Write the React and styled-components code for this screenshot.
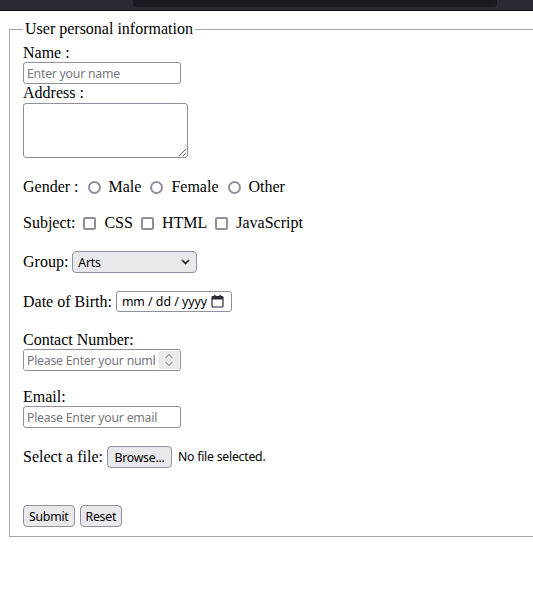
import React from "react";
import styled, { createGlobalStyle } from "styled-components";

const GlobalStyle = createGlobalStyle`
  html, body {
    margin: 0;
    padding: 0;
    overflow: hidden;
    background: #fff;
  }
  body {
    font-family: "Liberation Serif", "Times New Roman", serif;
    font-size: 16px;
    color: #000;
  }
`;

const controlFont = `
  font-family: "Noto Sans", "Open Sans", sans-serif;
  font-size: 12.3px;
  letter-spacing: -0.25px;
`;

const App = () => {
  return (
    <>
      <GlobalStyle />
      <TopBar>
        <TabStrip />
      </TopBar>
      <Page>
        <Fieldset>
          <Legend>User personal information</Legend>

          <FieldLabel htmlFor="name">Name :</FieldLabel>
          <TextInput id="name" type="text" placeholder="Enter your name" />

          <FieldLabel htmlFor="address">Address :</FieldLabel>
          <AddressBox id="address" />

          <Row $top={20}>
            <span>Gender :</span>
            <Radio type="radio" name="gender" />
            <span>Male</span>
            <Radio type="radio" name="gender" />
            <span>Female</span>
            <Radio type="radio" name="gender" />
            <span>Other</span>
          </Row>

          <Row $top={18}>
            <span>Subject:</span>
            <Checkbox type="checkbox" />
            <span>CSS</span>
            <Checkbox type="checkbox" />
            <span>HTML</span>
            <Checkbox type="checkbox" />
            <span>JavaScript</span>
          </Row>

          <Row $top={19} $height={22}>
            <span>Group:</span>
            <SelectBox defaultValue="arts">
              <option value="arts">Arts</option>
              <option value="science">Science</option>
              <option value="commerce">Commerce</option>
            </SelectBox>
          </Row>

          <Row $top={18} $height={21}>
            <span>Date of Birth:</span>
            <DateBox>
              <DateText>mm / dd / yyyy</DateText>
              <svg width="13" height="13" viewBox="0 0 13 13">
                <rect x="1" y="1.5" width="11" height="10.5" rx="1" fill="none" stroke="#2b2a33" strokeWidth="1.2" />
                <rect x="1" y="1.5" width="11" height="3" fill="#2b2a33" />
                <rect x="3" y="0" width="1.5" height="2.5" fill="#2b2a33" />
                <rect x="8.5" y="0" width="1.5" height="2.5" fill="#2b2a33" />
              </svg>
            </DateBox>
          </Row>

          <FieldLabel $top={19} htmlFor="contact">Contact Number:</FieldLabel>
          <NumberBox>
            <BareInput id="contact" type="text" placeholder="Please Enter your number" />
            <Spinner>
              <svg width="10" height="16" viewBox="0 0 10 16">
                <path d="M1.5 6 L5 2.5 L8.5 6" fill="none" stroke="#a3a3ab" strokeWidth="1.3" />
                <path d="M1.5 10 L5 13.5 L8.5 10" fill="none" stroke="#a3a3ab" strokeWidth="1.3" />
              </svg>
            </Spinner>
          </NumberBox>

          <FieldLabel $top={17} htmlFor="email">Email:</FieldLabel>
          <TextInput id="email" type="email" placeholder="Please Enter your email" />

          <Row $top={18} $height={22}>
            <span>Select a file:</span>
            <FileButton type="button">Browse...</FileButton>
            <FileStatus>No file selected.</FileStatus>
          </Row>

          <ButtonRow>
            <PushButton type="submit">Submit</PushButton>
            <PushButton type="reset">Reset</PushButton>
          </ButtonRow>
        </Fieldset>
      </Page>
    </>
  );
};

export default App;

// Styled Components
const TopBar = styled.div`
  height: 10px;
  background: #2b2a33;
  border-bottom: 1px solid #0c0c0d;
  padding-left: 133px;
`;

const TabStrip = styled.div`
  width: 364px;
  height: 7px;
  background: #1c1b22;
  border-radius: 0 0 4px 4px;
`;

const Page = styled.div`
  padding: 9px 0 0 9px;
`;

const Fieldset = styled.fieldset`
  margin: 0;
  width: 600px;
  padding: 6px 13px 9px;
  border: 1px solid #a6a6a6;
`;

const Legend = styled.legend`
  padding: 0 2px;
  line-height: 18px;
`;

const FieldLabel = styled.label`
  display: block;
  line-height: 18px;
  margin-top: ${(p) => p.$top || 0}px;
`;

const TextInput = styled.input`
  display: block;
  box-sizing: border-box;
  width: 158px;
  height: 22px;
  margin: 0;
  padding: 0 3px;
  border: 1px solid #8f8f9d;
  border-radius: 3px;
  ${controlFont}
  color: #000;
  outline: none;

  &::placeholder {
    color: #77767e;
  }
`;

const AddressBox = styled.textarea`
  display: block;
  box-sizing: border-box;
  width: 165px;
  height: 55px;
  margin: 1px 0 0;
  border: 1px solid #8f8f9d;
  border-radius: 3px;
  ${controlFont}
  outline: none;
`;

const Row = styled.div`
  display: flex;
  align-items: center;
  height: ${(p) => p.$height || 18}px;
  margin-top: ${(p) => p.$top}px;
  line-height: 18px;
  white-space: nowrap;
`;

const Radio = styled.input`
  appearance: none;
  box-sizing: border-box;
  width: 13px;
  height: 13px;
  margin: 0 8px 0 9px;
  border: 2px solid #8f8f9d;
  border-radius: 50%;
  background: #fff;
`;

const Checkbox = styled.input`
  appearance: none;
  box-sizing: border-box;
  width: 13px;
  height: 13px;
  margin: 0 8px 0 8px;
  border: 2px solid #8f8f9d;
  border-radius: 2px;
  background: #fff;
`;

const SelectBox = styled.select`
  appearance: none;
  box-sizing: border-box;
  width: 125px;
  height: 22px;
  margin: 0 0 0 4px;
  padding: 0 20px 0 5px;
  border: 1px solid #8f8f9d;
  border-radius: 4px;
  background-color: #e9e9ed;
  background-image: url("data:image/svg+xml;utf8,<svg xmlns='http://www.w3.org/2000/svg' width='9' height='6' viewBox='0 0 9 6'><path d='M1 1 L4.5 4.5 L8 1' fill='none' stroke='black' stroke-width='1.5'/></svg>");
  background-repeat: no-repeat;
  background-position: right 6px center;
  ${controlFont}
  color: #000;
  outline: none;
`;

const DateBox = styled.div`
  display: flex;
  align-items: center;
  justify-content: space-between;
  box-sizing: border-box;
  width: 116px;
  height: 21px;
  margin-left: 4px;
  padding: 0 7px 0 5px;
  border: 1px solid #8f8f9d;
  border-radius: 3px;
`;

const DateText = styled.span`
  ${controlFont}
  letter-spacing: 0;
  color: #000;
`;

const NumberBox = styled.div`
  display: flex;
  box-sizing: border-box;
  width: 158px;
  height: 22px;
  border: 1px solid #8f8f9d;
  border-radius: 3px;
  overflow: hidden;
`;

const BareInput = styled.input`
  flex: 1;
  min-width: 0;
  margin: 0;
  padding: 0 3px;
  border: none;
  ${controlFont}
  outline: none;

  &::placeholder {
    color: #77767e;
  }
`;

const Spinner = styled.span`
  display: flex;
  align-items: center;
  justify-content: center;
  width: 20px;
  margin: 1px;
  background: #e9e9ed;
`;

const ButtonBase = styled.button`
  box-sizing: border-box;
  height: 22px;
  margin: 0;
  padding: 0 5px;
  border: 1px solid #8f8f9d;
  border-radius: 4px;
  background: #e9e9ed;
  ${controlFont}
  color: #000;
`;

const FileButton = styled(ButtonBase)`
  width: 65px;
  margin-left: 4px;
  padding: 0;
`;

const FileStatus = styled.span`
  margin-left: 6px;
  ${controlFont}
`;

const ButtonRow = styled.div`
  display: flex;
  gap: 5px;
  margin-top: 37px;
`;

const PushButton = styled(ButtonBase)``;
